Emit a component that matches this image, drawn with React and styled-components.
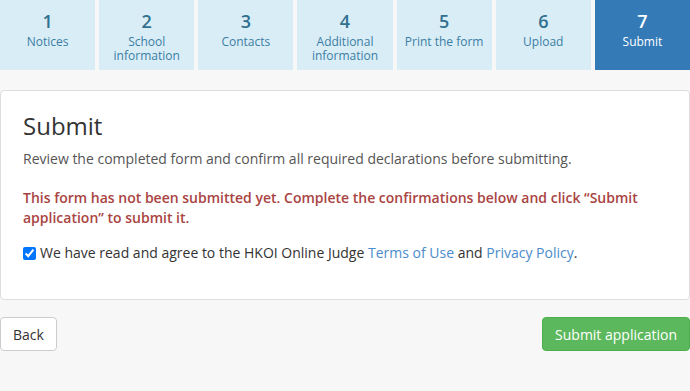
import React, { useState } from 'react';
import styled, { createGlobalStyle } from 'styled-components';

const GlobalStyle = createGlobalStyle`
  body {
    margin: 0;
    background: #f7f7f7;
    font-family: "Open Sans", "Liberation Sans", sans-serif;
    color: #333;
  }
`;

const STEPS = [
  { num: 1, label: 'Notices' },
  { num: 2, label: 'School information' },
  { num: 3, label: 'Contacts' },
  { num: 4, label: 'Additional information' },
  { num: 5, label: 'Print the form' },
  { num: 6, label: 'Upload' },
  { num: 7, label: 'Submit', active: true },
];

const Stepper = styled.div`
  display: flex;
  gap: 4px;
  height: 70px;
`;

const Step = styled.div`
  flex: 1;
  display: flex;
  flex-direction: column;
  align-items: center;
  padding: 11px 8px 0;
  box-sizing: border-box;
  background: ${({ active }) => (active ? '#337ab7' : '#d9edf7')};
  color: ${({ active }) => (active ? '#fff' : '#31708f')};
  text-align: center;
`;

const StepNum = styled.div`
  font-size: 18px;
  font-weight: 600;
  line-height: 20px;
`;

const StepLabel = styled.div`
  font-size: 12px;
  line-height: 14px;
  margin-top: 4px;
  max-width: 80px;
  color: ${({ active }) => (active ? '#fff' : '#3b7ea3')};
`;

const Card = styled.div`
  margin-top: 20px;
  background: #fff;
  border: 1px solid #ddd;
  border-radius: 4px;
  padding: 22px 22px 36px;
`;

const Title = styled.h2`
  margin: 0 0 10px;
  font-size: 24px;
  font-weight: 400;
  line-height: 26px;
  color: #333;
`;

const Lead = styled.p`
  margin: 0 0 19px;
  font-size: 14px;
  line-height: 20px;
  color: #555;
`;

const Warning = styled.p`
  margin: 0 0 15px;
  font-size: 14px;
  font-weight: 600;
  line-height: 20px;
  color: #a94442;
`;

const Check = styled.label`
  display: flex;
  align-items: center;
  gap: 4px;
  font-size: 14px;
  line-height: 20px;
  color: #333;

  input {
    margin: 0;
    width: 13px;
    height: 13px;
  }
`;

const Link = styled.a`
  color: #4a8ccc;
  text-decoration: none;
`;

const Actions = styled.div`
  display: flex;
  justify-content: space-between;
  margin-top: 17px;
`;

const Button = styled.button`
  height: 34px;
  padding: 0 12px;
  font-family: inherit;
  font-size: 14px;
  border-radius: 4px;
  border: 1px solid ${({ primary }) => (primary ? '#4cae4c' : '#ccc')};
  background: ${({ primary }) => (primary ? '#5cb85c' : '#fff')};
  color: ${({ primary }) => (primary ? '#fff' : '#333')};
`;

const App = () => {
  const [agreed, setAgreed] = useState(true);

  return (
    <>
      <GlobalStyle />
      <Stepper>
        {STEPS.map((s) => (
          <Step key={s.num} active={s.active}>
            <StepNum>{s.num}</StepNum>
            <StepLabel active={s.active}>{s.label}</StepLabel>
          </Step>
        ))}
      </Stepper>

      <Card>
        <Title>Submit</Title>
        <Lead>Review the completed form and confirm all required declarations before submitting.</Lead>
        <Warning>
          This form has not been submitted yet. Complete the confirmations below and click “Submit
          application” to submit it.
        </Warning>
        <Check>
          <input type="checkbox" checked={agreed} onChange={(e) => setAgreed(e.target.checked)} />
          <span>
            We have read and agree to the HKOI Online Judge <Link href="#">Terms of Use</Link> and{' '}
            <Link href="#">Privacy Policy</Link>.
          </span>
        </Check>
      </Card>

      <Actions>
        <Button>Back</Button>
        <Button primary>Submit application</Button>
      </Actions>
    </>
  );
};

export default App;
